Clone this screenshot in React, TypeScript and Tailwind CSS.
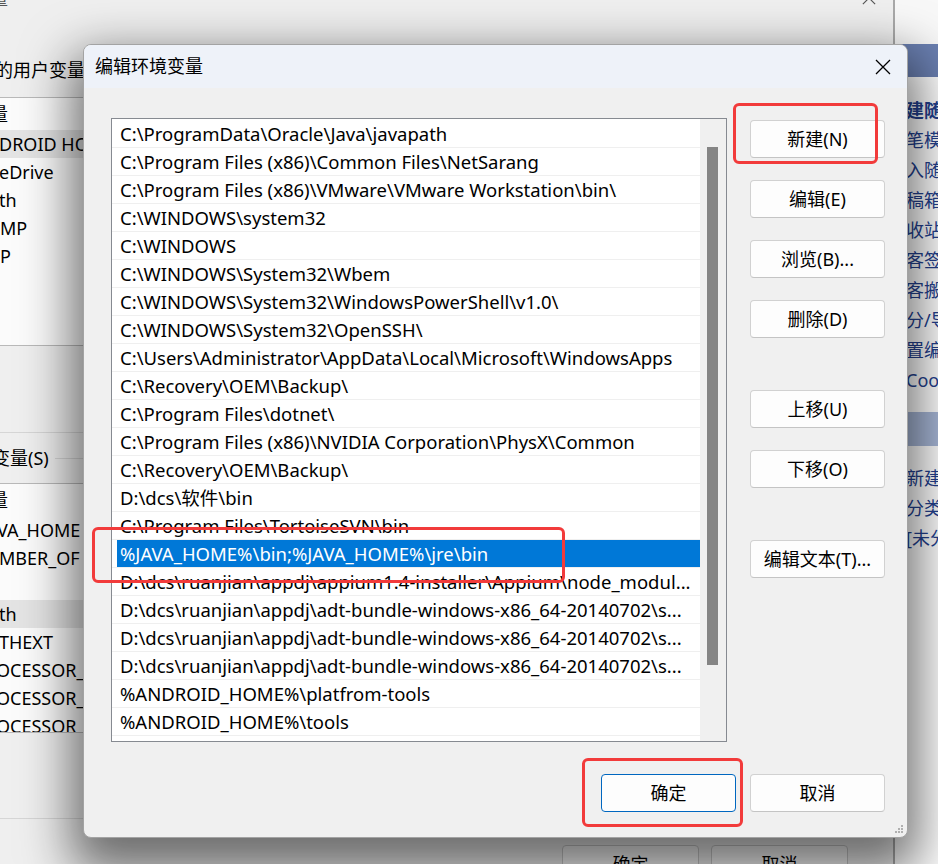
import clsx from "clsx";

const paths = [
  "C:\\ProgramData\\Oracle\\Java\\javapath",
  "C:\\Program Files (x86)\\Common Files\\NetSarang",
  "C:\\Program Files (x86)\\VMware\\VMware Workstation\\bin\\",
  "C:\\WINDOWS\\system32",
  "C:\\WINDOWS",
  "C:\\WINDOWS\\System32\\Wbem",
  "C:\\WINDOWS\\System32\\WindowsPowerShell\\v1.0\\",
  "C:\\WINDOWS\\System32\\OpenSSH\\",
  "C:\\Users\\Administrator\\AppData\\Local\\Microsoft\\WindowsApps",
  "C:\\Recovery\\OEM\\Backup\\",
  "C:\\Program Files\\dotnet\\",
  "C:\\Program Files (x86)\\NVIDIA Corporation\\PhysX\\Common",
  "C:\\Recovery\\OEM\\Backup\\",
  "D:\\dcs\\软件\\bin",
  "C:\\Program Files\\TortoiseSVN\\bin",
  "%JAVA_HOME%\\bin;%JAVA_HOME%\\jre\\bin",
  "D:\\dcs\\ruanjian\\appdj\\appium1.4-installer\\Appium\\node_modul...",
  "D:\\dcs\\ruanjian\\appdj\\adt-bundle-windows-x86_64-20140702\\s...",
  "D:\\dcs\\ruanjian\\appdj\\adt-bundle-windows-x86_64-20140702\\s...",
  "D:\\dcs\\ruanjian\\appdj\\adt-bundle-windows-x86_64-20140702\\s...",
  "%ANDROID_HOME%\\platfrom-tools",
  "%ANDROID_HOME%\\tools",
  "",
];
const selectedIndex = 15;

// 뒤쪽 창 목록에서 보이는 부분만
const userVars = [
  { text: "DROID HO", cut: "-ml-[1px]", selected: true },
  { text: "eDrive", cut: "-ml-[1px]" },
  { text: "th", cut: "-ml-[1px]" },
  { text: "MP", cut: "ml-0" },
  { text: "P", cut: "ml-0" },
];
const systemVars = [
  { text: "VA_HOME", cut: "-ml-[3px]" },
  { text: "MBER_OF", cut: "-ml-[1px]" },
  { text: "", cut: "ml-0" },
  { text: "th", cut: "-ml-[1px]", selected: true },
  { text: "THEXT", cut: "-ml-[1px]" },
  { text: "OCESSOR_", cut: "-ml-[4px]" },
  { text: "OCESSOR_", cut: "-ml-[4px]" },
  { text: "OCESSOR_", cut: "-ml-[4px]" },
];

const sideLinks = [
  { text: "建随", bold: true },
  { text: "笔模" },
  { text: "入随" },
  { text: "稿箱" },
  { text: "收站" },
  { text: "客签" },
  { text: "客搬" },
  { text: "分/导" },
  { text: "置编" },
  { text: "Coo" },
];

function CloseIcon({ size = 16, className = "" }: { size?: number; className?: string }) {
  return (
    <svg width={size} height={size} viewBox="0 0 16 16" className={className}>
      <path d="M1 1 L15 15 M15 1 L1 15" stroke="currentColor" strokeWidth="1.3" fill="none" />
    </svg>
  );
}

function WinButton({ label, primary = false }: { label: string; primary?: boolean }) {
  return (
    <button
      type="button"
      className={clsx(
        "w-[135px] h-[38px] shrink-0 rounded-[4px] bg-[#fdfdfd] text-[18px] text-black border",
        primary ? "border-[#0067c0]" : "border-[#d1d1d1] border-b-[#c4c4c4]"
      )}
    >
      {label}
    </button>
  );
}

function BackWindow() {
  return (
    <div className="w-[895px] shrink-0 h-full bg-[#efefef] border-r-2 border-[#a9a9a9] flex flex-col text-[18px] text-black overflow-hidden">
      <div className="-mt-[18px] h-[32px] shrink-0 flex items-center justify-between pr-[17px]">
        <span className="-ml-[10px] text-[#555]">量</span>
        <CloseIcon size={14} className="text-[#555]" />
      </div>

      <div className="mt-[44px] h-[24px] shrink-0 flex items-center whitespace-nowrap">
        <span className="-ml-[5px]">的用户变量</span>
      </div>

      <div className="mt-[15px] h-[249px] shrink-0 border-y border-[#b9b9b9] bg-[#fbfbfb] flex flex-col overflow-hidden">
        <div className="h-[32px] shrink-0 flex items-center">
          <span className="-ml-[10px]">量</span>
        </div>
        {userVars.map((v, i) => (
          <div
            key={i}
            className={clsx("h-[28px] shrink-0 flex items-center whitespace-nowrap", v.selected && "bg-[#e4e4e4]")}
          >
            <span className={v.cut}>{v.text}</span>
          </div>
        ))}
      </div>

      <div className="mt-[86px] h-px shrink-0 bg-[#d6d6d6]" />

      <div className="mt-[13px] h-[24px] shrink-0 flex items-center whitespace-nowrap">
        <span className="-ml-[8px]">变量(S)</span>
        <div className="ml-[6px] flex-1 h-px bg-[#d6d6d6]" />
      </div>

      <div className="mt-[13px] h-[250px] shrink-0 border-y border-[#b9b9b9] bg-[#fbfbfb] flex flex-col overflow-hidden">
        <div className="h-[32px] shrink-0 flex items-center">
          <span className="-ml-[10px]">量</span>
        </div>
        {systemVars.map((v, i) => (
          <div
            key={i}
            className={clsx("h-[28px] shrink-0 flex items-center whitespace-nowrap", v.selected && "bg-[#e4e4e4]")}
          >
            <span className={v.cut}>{v.text}</span>
          </div>
        ))}
      </div>

      <div className="mt-[85px] h-px shrink-0 bg-[#d6d6d6]" />

      <div className="mt-[26px] shrink-0 flex justify-end gap-[12px] pr-[45px]">
        <div className="w-[137px] h-[38px] rounded-[4px] border border-[#c9c9c9] bg-[#f7f7f7] flex items-center justify-center">
          确定
        </div>
        <div className="w-[137px] h-[38px] rounded-[4px] border border-[#c9c9c9] bg-[#f7f7f7] flex items-center justify-center">
          取消
        </div>
      </div>
    </div>
  );
}

function SideApp() {
  return (
    <div className="flex-1 h-full bg-white flex flex-col text-[18px] text-[#23408e] whitespace-nowrap overflow-hidden">
      <div className="h-[44px] shrink-0 bg-[#f8f8f8]" />
      <div className="h-[33px] shrink-0 bg-[#6b80b2]" />
      <div className="pt-[18px] pl-[11px] flex flex-col leading-[30px]">
        {sideLinks.map((l, i) => (
          <span key={i} className={clsx(l.bold && "font-bold")}>
            {l.text}
          </span>
        ))}
      </div>
      <div className="mt-[17px] h-[34px] shrink-0 bg-[#a8b8d8]" />
      <div className="pt-[17px] pl-[11px] flex flex-col leading-[30px]">
        <span>新建</span>
        <span>分类</span>
        <span>[未分</span>
      </div>
    </div>
  );
}

function PathList() {
  return (
    <div className="w-[616px] h-[624px] shrink-0 border border-[#868a91] bg-white flex overflow-hidden">
      <div className="flex-1 pt-px flex flex-col overflow-hidden">
        {paths.map((p, i) => (
          <div key={i} className="h-[28px] shrink-0 border-b border-[#efefef] pl-[5px]">
            <div
              className={clsx(
                "h-full flex items-center pl-[3px] whitespace-nowrap leading-[20px]",
                i === selectedIndex ? "bg-[#0078d7] text-white" : "text-black"
              )}
            >
              {p}
            </div>
          </div>
        ))}
      </div>
      <div className="w-[26px] shrink-0 bg-[#f0f0f0] pt-[28px]">
        <div className="ml-[7px] w-[11px] h-[518px] bg-[#858585]" />
      </div>
    </div>
  );
}

function EditDialog() {
  return (
    <div className="absolute left-[83px] top-[44px] w-[825px] h-[794px] rounded-[8px] border border-[#a3a3a3] bg-[#f0f0f0] shadow-[0_22px_50px_12px_rgba(0,0,0,0.55)] flex flex-col overflow-hidden text-black">
      <div className="h-[43px] shrink-0 bg-[#eef2f9] flex items-center justify-between pl-[11px] pr-[16px]">
        <span className="text-[18px]">编辑环境变量</span>
        <CloseIcon size={16} />
      </div>

      <div className="flex-1 flex flex-col pl-[27px] pr-[22px] pt-[30px] text-[18.5px]">
        <div className="flex">
          <PathList />
          <div className="ml-[23px] pt-[2px] flex flex-col text-[18px]">
            <WinButton label="新建(N)" />
            <div className="mt-[22px]">
              <WinButton label="编辑(E)" />
            </div>
            <div className="mt-[22px]">
              <WinButton label="浏览(B)..." />
            </div>
            <div className="mt-[22px]">
              <WinButton label="删除(D)" />
            </div>
            <div className="mt-[52px]">
              <WinButton label="上移(U)" />
            </div>
            <div className="mt-[22px]">
              <WinButton label="下移(O)" />
            </div>
            <div className="mt-[52px]">
              <WinButton label="编辑文本(T)..." />
            </div>
          </div>
        </div>

        <div className="mt-[32px] flex justify-end gap-[14px]">
          <WinButton label="确定" primary />
          <WinButton label="取消" />
        </div>
      </div>

      {/* 크기 조절 손잡이 */}
      <svg width="8" height="8" viewBox="0 0 8 8" className="absolute right-[4px] bottom-[4px]">
        <rect x="6" y="0" width="2" height="2" fill="#b0b0b0" />
        <rect x="6" y="3" width="2" height="2" fill="#b0b0b0" />
        <rect x="3" y="3" width="2" height="2" fill="#b0b0b0" />
        <rect x="6" y="6" width="2" height="2" fill="#b0b0b0" />
        <rect x="3" y="6" width="2" height="2" fill="#b0b0b0" />
        <rect x="0" y="6" width="2" height="2" fill="#b0b0b0" />
      </svg>
    </div>
  );
}

export default function App() {
  return (
    <div className="relative w-[938px] h-[864px] overflow-hidden flex bg-[#f0f0f0] font-['Noto_Sans','Noto_Sans_CJK_SC',sans-serif]">
      <BackWindow />
      <SideApp />
      <EditDialog />

      {/* 빨간 표시 상자 */}
      <div className="absolute left-[733px] top-[103px] w-[145px] h-[61px] rounded-[6px] border-[3px] border-[#f23b3b]" />
      <div className="absolute left-[92px] top-[527px] w-[473px] h-[56px] rounded-[6px] border-[3px] border-[#f23b3b]" />
      <div className="absolute left-[582px] top-[758px] w-[161px] h-[69px] rounded-[6px] border-[3px] border-[#f23b3b]" />
    </div>
  );
}
